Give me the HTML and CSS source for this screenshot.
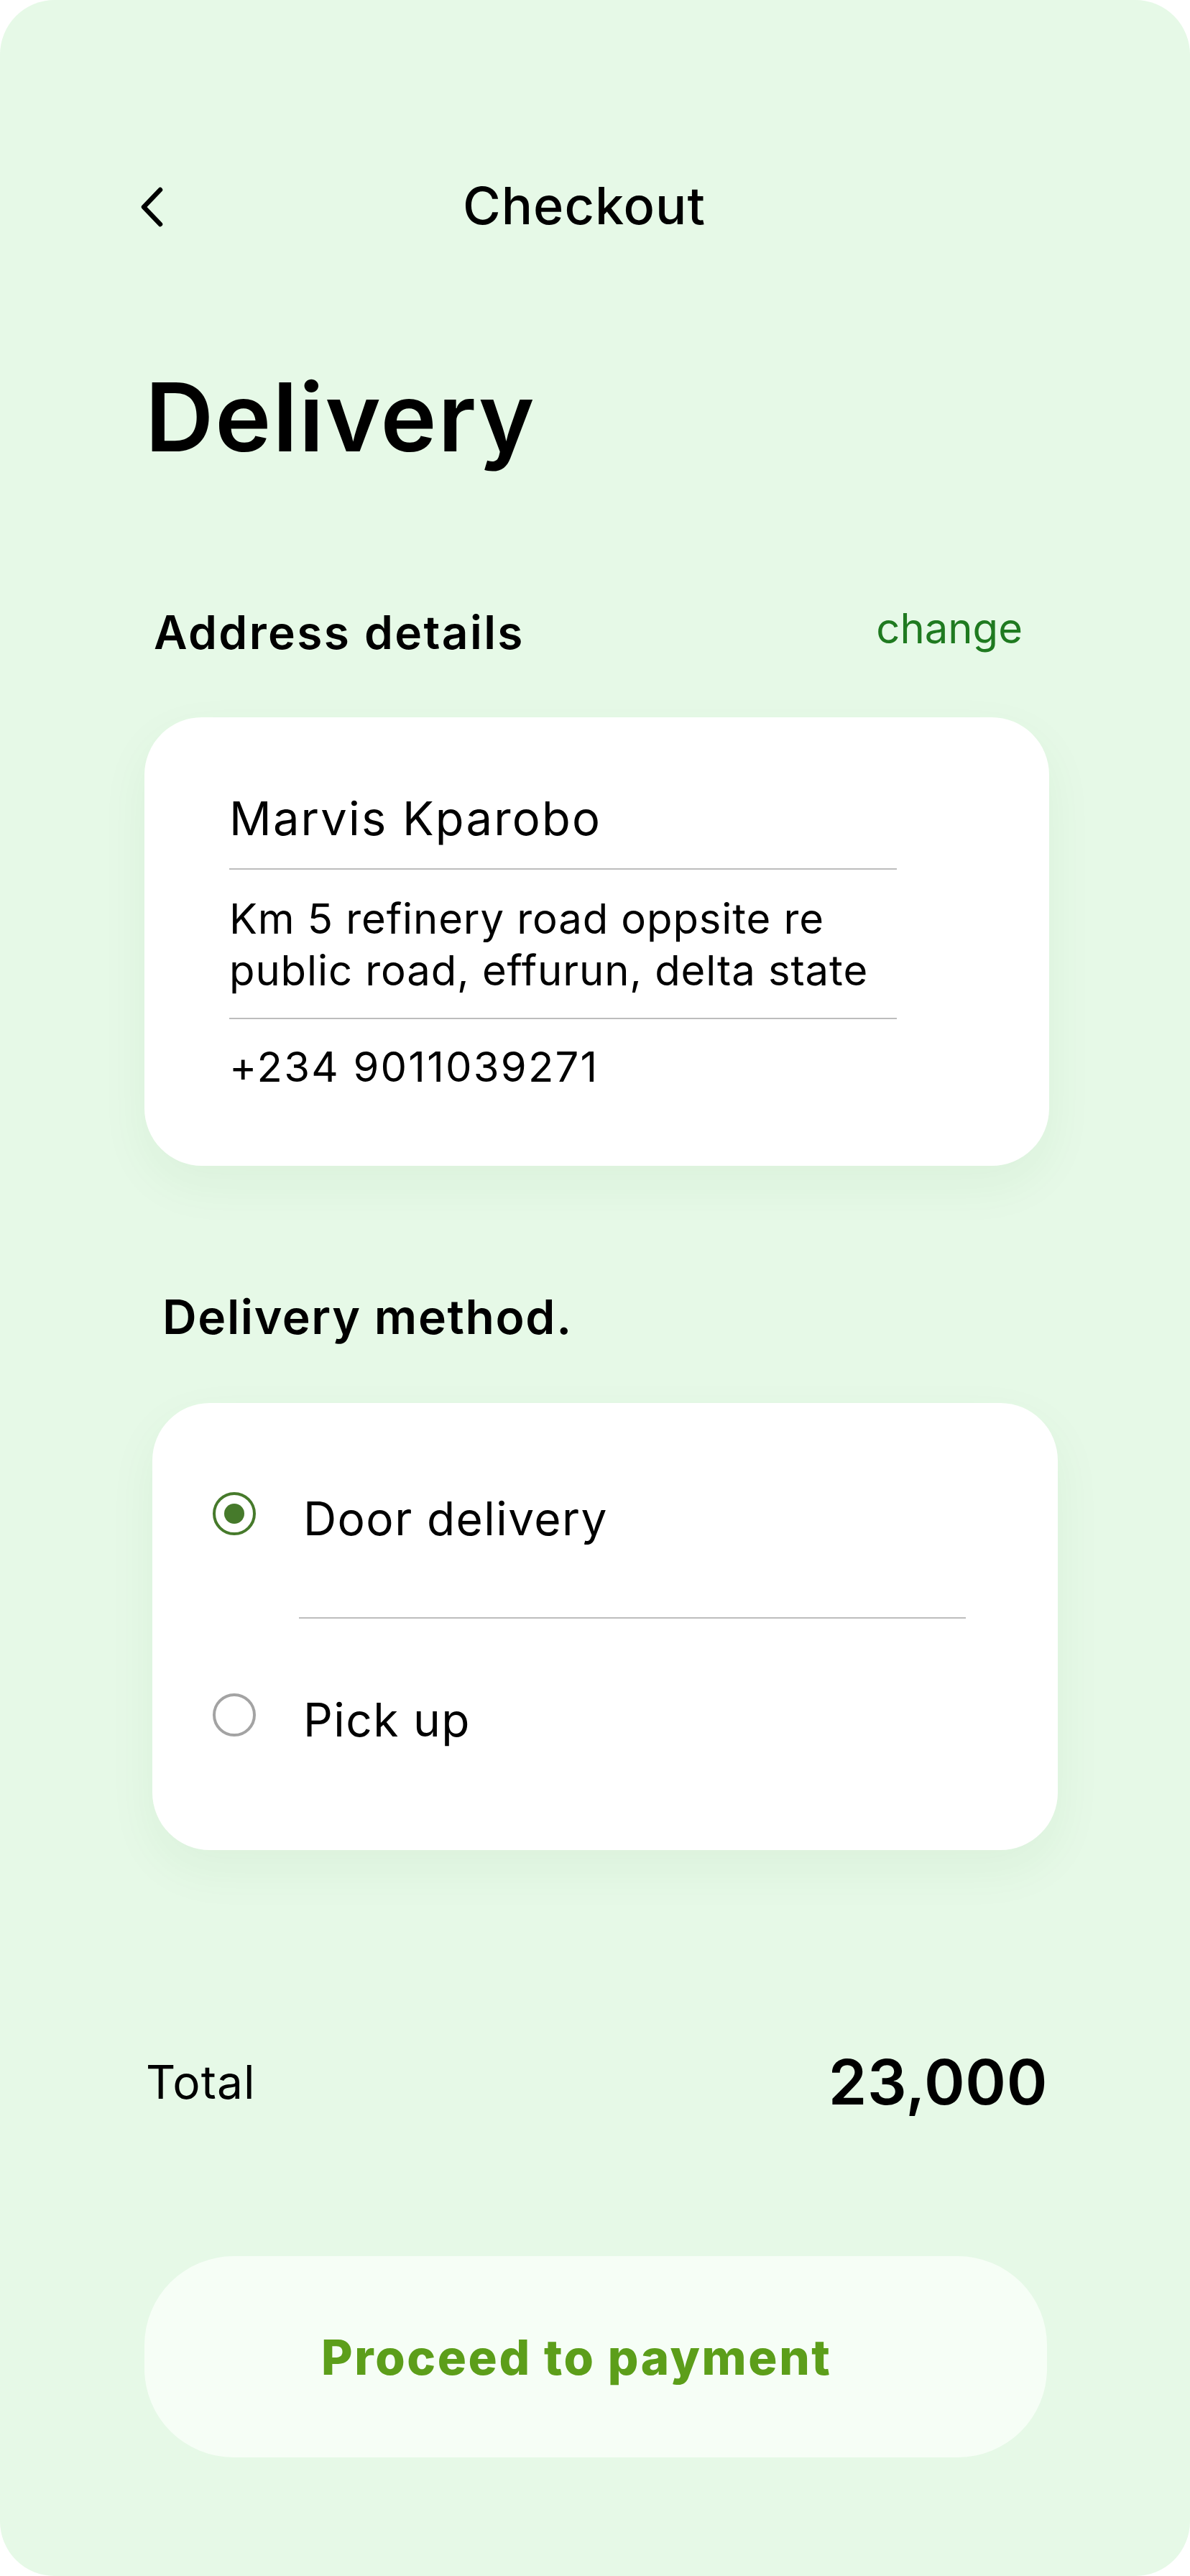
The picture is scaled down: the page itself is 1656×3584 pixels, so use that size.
FILE: index.html
```html
<!DOCTYPE html>
<html lang="en">
<head>
<meta charset="utf-8">
<title>Checkout</title>
<link rel="stylesheet" href="styles.css">
</head>
<body>
<div class="screen">
  <header class="topbar">
    <svg class="back" width="40" height="64" viewBox="0 0 40 64" aria-hidden="true">
      <path d="M33 10 L10 34 L33 58" fill="none" stroke="#000" stroke-width="6.5" stroke-linecap="round" stroke-linejoin="round"/>
    </svg>
    <h2 class="topbar-title">Checkout</h2>
  </header>

  <h1 class="page-title">Delivery</h1>

  <div class="section-row">
    <h3 class="section-title">Address details</h3>
    <a class="change-link">change</a>
  </div>

  <div class="card address-card">
    <div class="addr-name">Marvis Kparobo</div>
    <div class="divider addr-div1"></div>
    <div class="addr-text">Km 5 refinery road oppsite re<br>public road, effurun, delta state</div>
    <div class="divider addr-div2"></div>
    <div class="addr-phone">+234 9011039271</div>
  </div>

  <h3 class="method-title">Delivery method.</h3>

  <div class="card method-card">
    <div class="option option-first">
      <span class="radio radio-on"><span class="radio-dot"></span></span>
      <span class="option-label">Door delivery</span>
    </div>
    <div class="divider method-div"></div>
    <div class="option option-second">
      <span class="radio radio-off"></span>
      <span class="option-label">Pick up</span>
    </div>
  </div>

  <div class="total-row">
    <span class="total-label">Total</span>
    <span class="total-value">23,000</span>
  </div>

  <button class="pay-btn">Proceed to payment</button>
</div>
</body>
</html>
```

FILE: styles.css
```css
* { box-sizing: border-box; }

html, body {
  margin: 0;
  padding: 0;
  background: #ffffff;
}

body {
  font-family: Inter, "Liberation Sans", sans-serif;
  color: #000;
}

.screen {
  width: 1656px;
  height: 3584px;
  background: #E6F9E7;
  border-radius: 76px;
  overflow: hidden;
  padding-top: 250px;
}

.topbar {
  display: flex;
  align-items: center;
  height: 72px;
  padding-left: 190px;
}

.back { display: block; flex: none; }

.topbar-title {
  margin: 0 0 0 414px;
  font-size: 72px;
  line-height: 72px;
  font-weight: 500;
  letter-spacing: 1px;
}

.page-title {
  margin: 192px 0 0 202px;
  font-size: 132px;
  line-height: 132px;
  font-weight: 600;
  letter-spacing: 2px;
}

.section-row {
  display: flex;
  justify-content: space-between;
  align-items: flex-start;
  margin-top: 202px;
  padding: 0 233px 0 214px;
}

.section-title {
  margin: 0;
  font-size: 64px;
  line-height: 64px;
  font-weight: 600;
  letter-spacing: 2.4px;
}

.change-link {
  margin-top: -3px;
  font-size: 58px;
  line-height: 58px;
  font-weight: 400;
  color: #1F7A20;
}

.card {
  background: #ffffff;
  border-radius: 80px;
  box-shadow: 0 26px 70px rgba(40, 110, 40, 0.055);
}

.address-card {
  margin: 86px 0 0 201px;
  width: 1259px;
  height: 624px;
  padding: 108px 212px 0 118px;
}

.addr-name {
  font-size: 65px;
  line-height: 66px;
  font-weight: 400;
  letter-spacing: 2.2px;
}

.divider {
  height: 2px;
  background: #BDBDBD;
}

.addr-div1 { margin-top: 36px; }

.addr-text {
  margin-top: 32px;
  font-size: 58px;
  line-height: 72px;
  letter-spacing: 0.9px;
}

.addr-div2 { margin-top: 30px; }

.addr-phone {
  margin-top: 30px;
  font-size: 58px;
  line-height: 72px;
  letter-spacing: 2.2px;
}

.method-title {
  margin: 177px 0 0 226px;
  font-size: 66px;
  line-height: 66px;
  font-weight: 600;
  letter-spacing: 1.6px;
}

.method-card {
  margin: 87px 0 0 212px;
  width: 1260px;
  height: 622px;
  padding: 129px 0 0 84px;
}

.option {
  display: flex;
  align-items: flex-start;
}

.radio {
  flex: none;
  width: 60px;
  height: 60px;
  margin-top: -5px;
  border-radius: 50%;
  display: flex;
  align-items: center;
  justify-content: center;
}

.radio-on { border: 4.5px solid #467A2B; }
.radio-off { border: 4.5px solid #A3A3A3; }

.radio-dot {
  width: 28px;
  height: 28px;
  border-radius: 50%;
  background: #467A2B;
}

.option-label {
  margin-left: 66px;
  font-size: 64px;
  line-height: 64px;
  font-weight: 400;
  letter-spacing: 1.4px;
}

.method-div {
  margin: 105px 0 0 120px;
  width: 928px;
}

.option-second { margin-top: 109px; }

.total-row {
  display: flex;
  justify-content: space-between;
  align-items: flex-start;
  margin-top: 280px;
  padding: 0 198px 0 203px;
}

.total-label {
  margin-top: 11px;
  font-size: 64px;
  line-height: 64px;
  font-weight: 400;
  letter-spacing: 1px;
}

.total-value {
  font-size: 86px;
  line-height: 86px;
  font-weight: 600;
  letter-spacing: 0.6px;
}

.pay-btn {
  display: block;
  margin: 199px 0 0 201px;
  width: 1256px;
  height: 280px;
  border: none;
  border-radius: 124px;
  background: #F6FEF6;
  padding: 0 0 0 246px;
  text-align: left;
  font-family: Inter, "Liberation Sans", sans-serif;
  font-size: 67px;
  line-height: 67px;
  font-weight: 800;
  letter-spacing: 2.6px;
  color: #5C9E1A;
}
```
